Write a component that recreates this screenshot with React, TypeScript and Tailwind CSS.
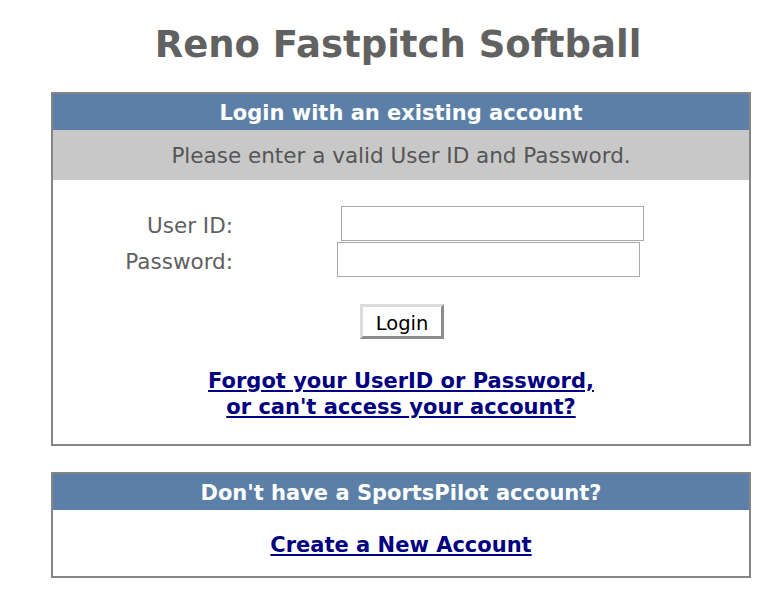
import React from 'react';

export default function App() {
    return (
        <div className="min-h-screen bg-white pt-[23px] font-['DejaVu_Sans',Verdana,Tahoma,sans-serif]">
            <h1 className="ml-[48px] w-[700px] text-center text-[37px] font-bold leading-[44px] text-[#616161]">
                Reno Fastpitch Softball
            </h1>

            <div className="ml-[51px] mt-[25px] w-[700px] border-2 border-[#858585]">
                <div className="flex h-[36px] items-center justify-center bg-[#5b7fa7] pt-[3px] text-[21px] font-bold text-white">
                    Login with an existing account
                </div>
                <div className="flex h-[50px] items-center justify-center bg-[#c8c8c8] pt-[2px] text-[21.5px] text-[#555555]">
                    Please enter a valid User ID and Password.
                </div>

                <div className="pt-[26px] pb-[24px]">
                    <div className="flex h-[35px] items-center">
                        <label className="h-[35px] w-[180px] pt-[5px] text-right text-[21.5px] leading-[30px] text-[#606060]">User ID:</label>
                        <input type="text" className="ml-[108px] h-[35px] w-[303px] border border-[#a9a9a9] bg-white outline-none" />
                    </div>
                    <div className="mt-[1px] flex h-[35px] items-center">
                        <label className="h-[35px] w-[180px] pt-[5px] text-right text-[21.5px] leading-[30px] text-[#606060]">Password:</label>
                        <input type="password" className="ml-[104px] h-[35px] w-[303px] border border-[#a9a9a9] bg-white outline-none" />
                    </div>

                    <div className="mt-[27px] flex justify-center">
                        <button className="ml-[2px] h-[35px] w-[84px] border-[3px] border-t-[#dcdcdc] border-l-[#dcdcdc] border-r-[#8c8c8c] border-b-[#8c8c8c] bg-white pt-[2px] text-[19.5px] text-black">
                            Login
                        </button>
                    </div>

                    <div className="mt-[29px] text-center text-[21px] font-bold leading-[26px]">
                        <a href="#" className="text-[#000080] underline">
                            Forgot your UserID or Password,
                            <br />
                            or can't access your account?
                        </a>
                    </div>
                </div>
            </div>

            <div className="ml-[51px] mt-[26px] w-[700px] border-2 border-[#858585]">
                <div className="flex h-[36px] items-center justify-center bg-[#5b7fa7] pt-[3px] text-[21px] font-bold text-white">
                    Don't have a SportsPilot account?
                </div>
                <div className="flex h-[66px] items-center justify-center pt-[5px]">
                    <a href="#" className="text-[21px] font-bold text-[#000080] underline">
                        Create a New Account
                    </a>
                </div>
            </div>
        </div>
    );
}
